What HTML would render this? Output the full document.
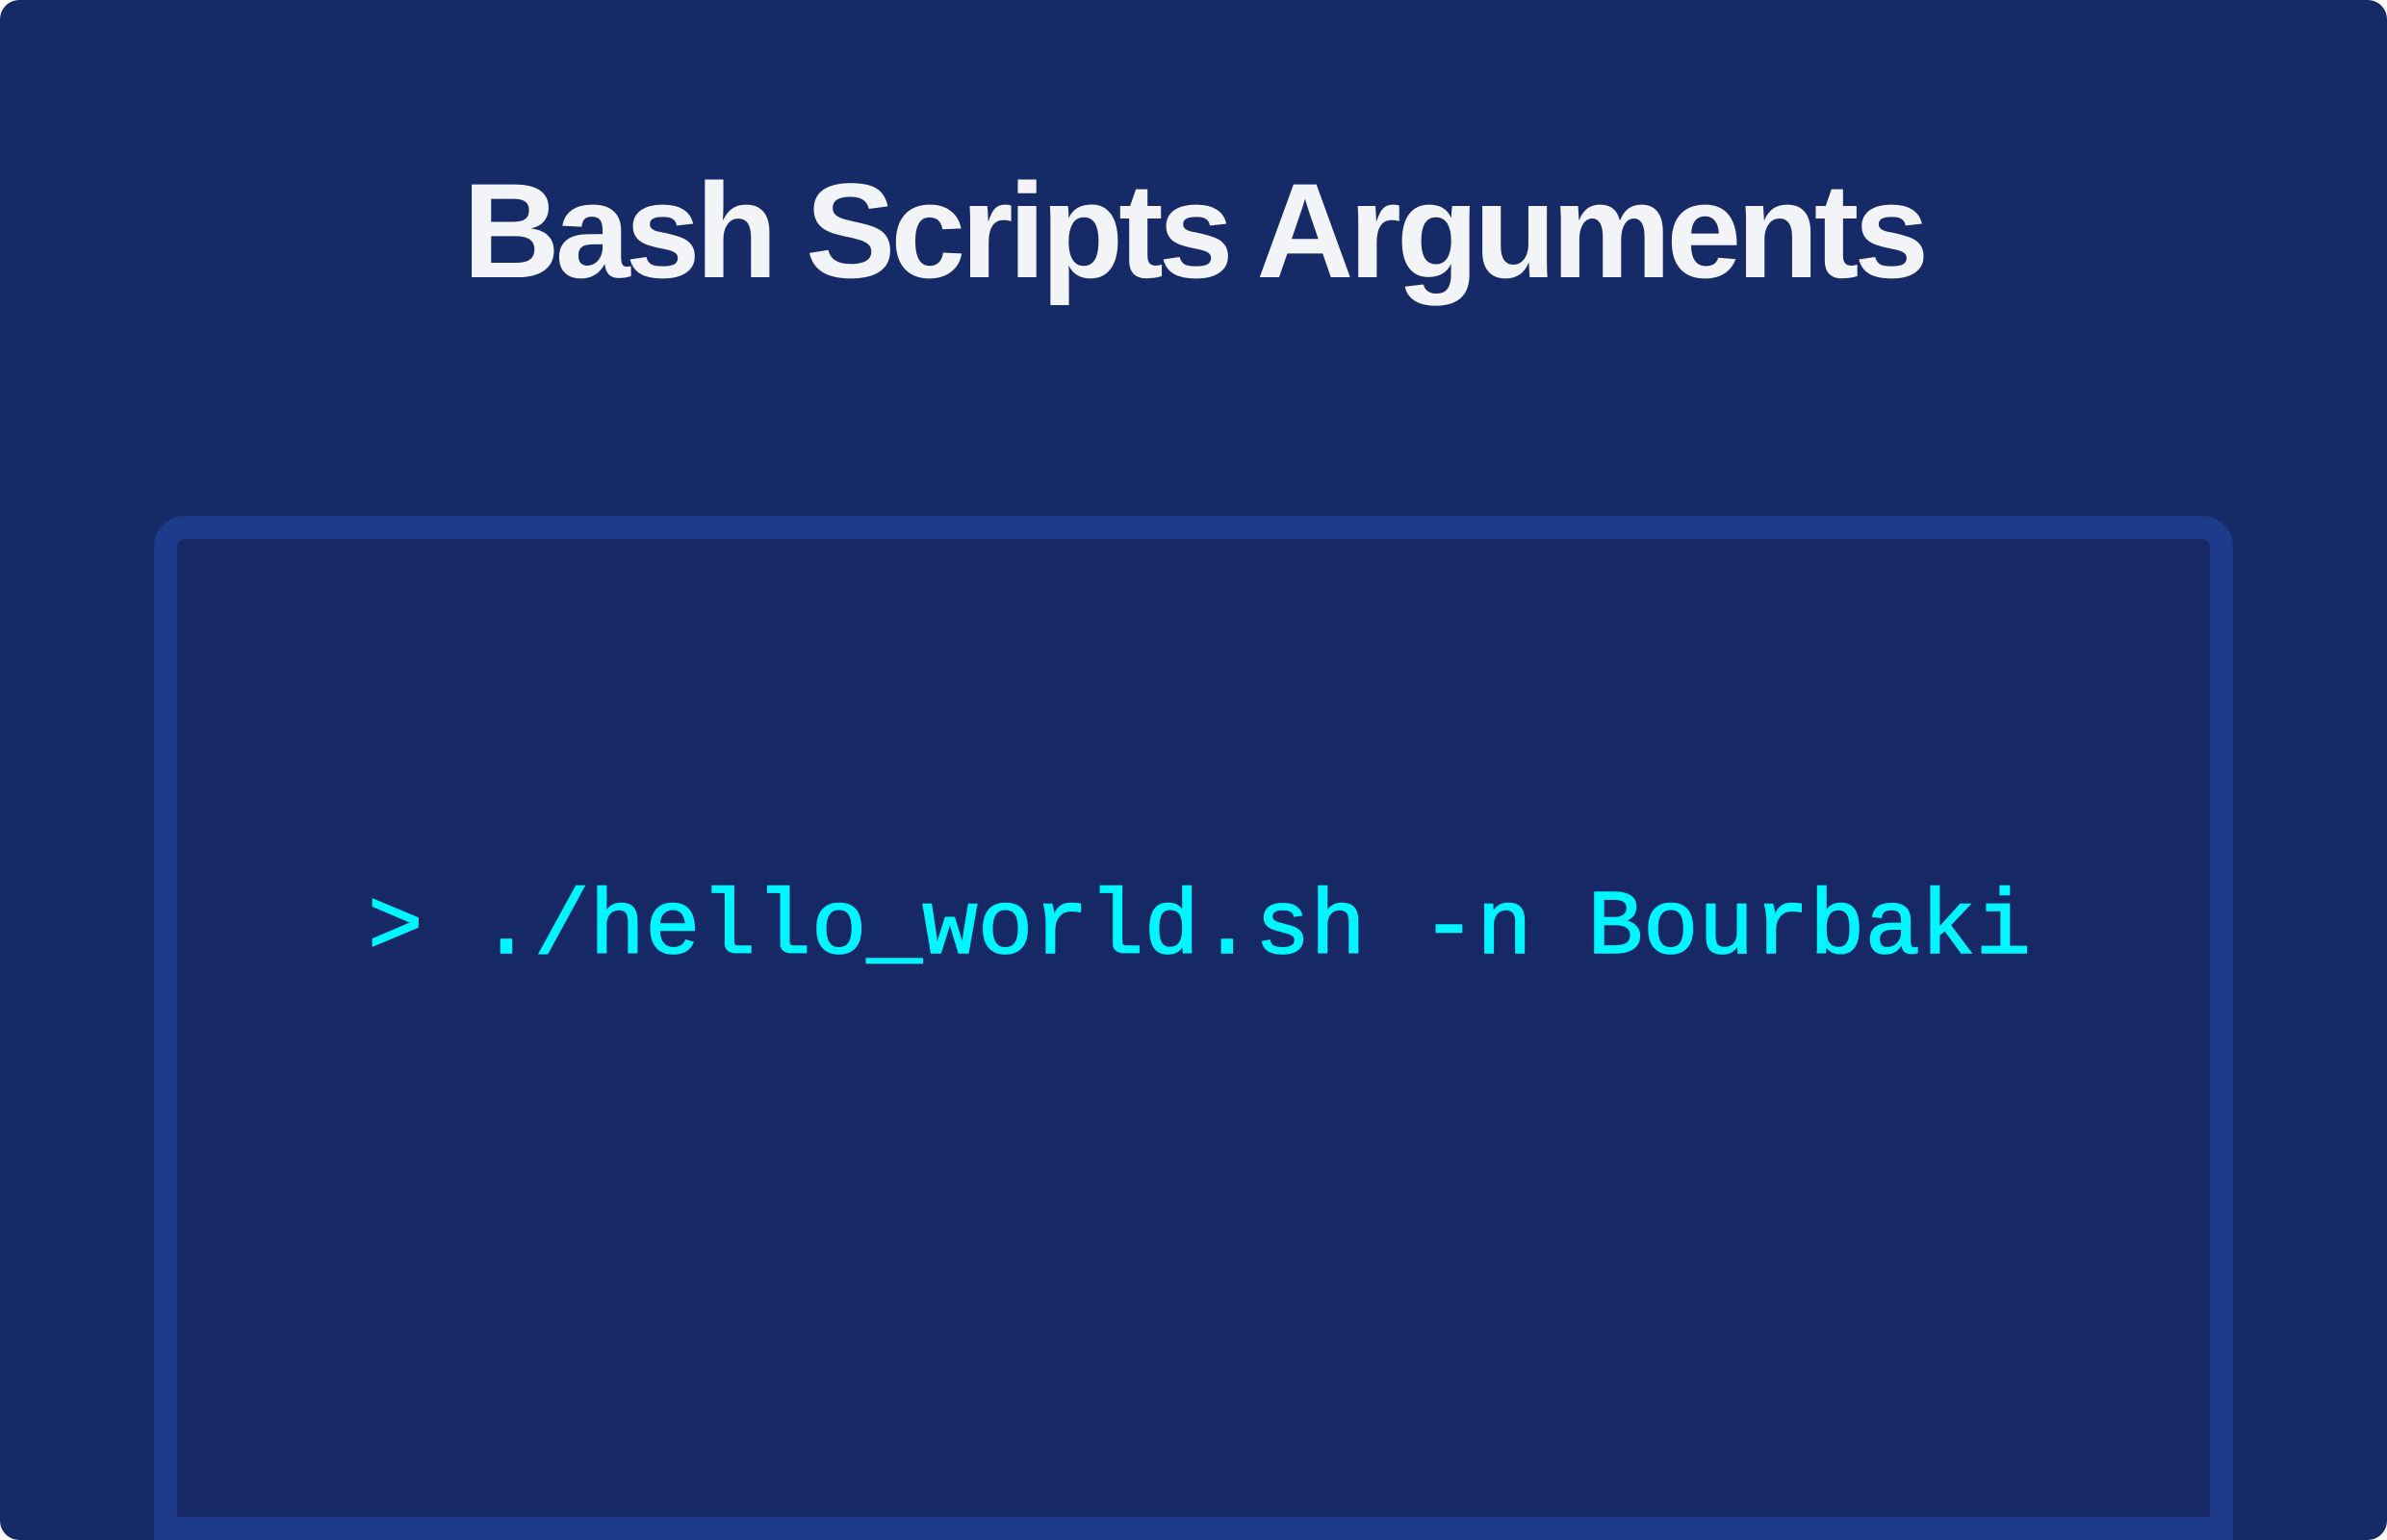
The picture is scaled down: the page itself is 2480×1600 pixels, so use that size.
<!DOCTYPE html>
<html><head><meta charset="utf-8"><style>
html,body{margin:0;padding:0;background:#fff;}
#p{position:relative;width:2480px;height:1600px;background:#172a68;border-radius:20px;overflow:hidden;}
h1{position:absolute;left:0;top:0;width:2480px;margin:0;text-align:center;font-family:"Liberation Sans",sans-serif;font-weight:700;font-size:140px;line-height:1;letter-spacing:-5px;color:#f3f4f8;}
h1 span{position:absolute;left:0;right:0;top:170px;}
#box{position:absolute;left:160px;top:536px;width:2112px;height:1016px;border:24px solid #1e3a8a;border-radius:32px 32px 0 0;background:#162966;}
#cmd{position:absolute;left:382px;top:917px;font-family:"Liberation Mono",monospace;font-size:96px;line-height:1;color:#00f6ff;white-space:pre;-webkit-text-stroke:1.5px #00f6ff;}
</style></head><body><div id="p">
<h1><span>Bash Scripts Arguments</span></h1>
<div id="box"></div>
<div id="cmd">&gt; ./hello_world.sh -n Bourbaki</div>
</div></body></html>
